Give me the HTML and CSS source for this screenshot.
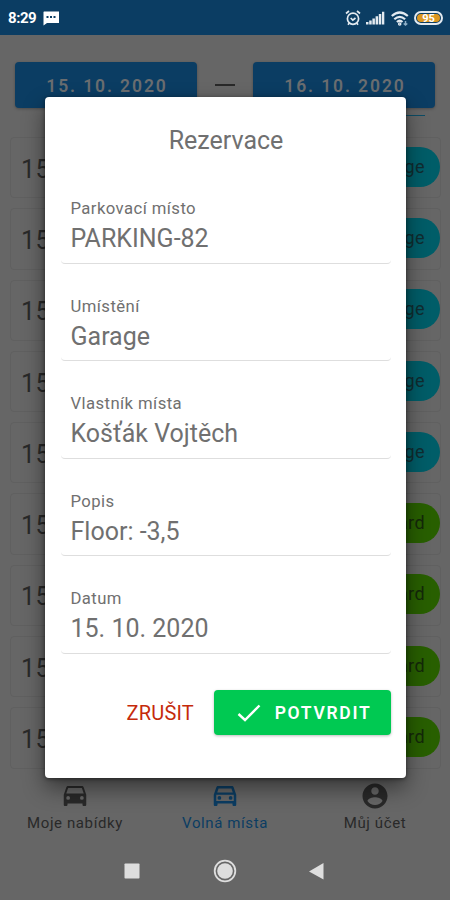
FILE: index.html
```html
<!DOCTYPE html>
<html lang="cs">
<head>
<meta charset="utf-8">
<title>Rezervace</title>
<link rel="stylesheet" href="styles.css">
</head>
<body>
<div class="app">
  <header class="status">
    <span class="clock">8:29</span>
    <svg class="msg" width="17" height="15" viewBox="0 0 17 15"><path fill="#fff" d="M1 .5h15v11.500H4L.5 14.500V1z"/><path stroke="#0b3d63" stroke-width="2" stroke-dasharray="2 1.500" d="M3.500 6h10"/></svg>
    <span class="grow"></span>
    <svg class="alarm" width="16" height="16" viewBox="0 0 16 16" fill="none" stroke="#e3eaf0" stroke-width="1.700"><circle cx="8" cy="8.700" r="5.600"/><path d="M1 3.500 4 1M15 3.500 12 1M5.700 8l2.100 2.100L10.500 8M4.300 13l-1.300 1.700M11.700 13l1.300 1.700"/></svg>
    <svg class="signal" width="19" height="14" viewBox="0 0 19 14" fill="#e3eaf0"><path d="M0 11h2.500v2.500H0zM3.200 9.500h2.500v4H3.200zM6.400 7.500h2.500v6H6.400zM9.600 5.300h2.500v8.200H9.600zM12.800 3h2.500v10.500h-2.500zM16 .8h2.300v12.700H16z"/></svg>
    <svg class="wifi" width="18" height="15" viewBox="0 0 18 15" fill="none" stroke="#e3eaf0" stroke-width="2.200"><path d="M.8 5Q8.700-2 16.800 5M3.300 8.300q5.400-5 10.800 0M5.900 11q2.800-2.500 5.600 0"/><circle cx="8.700" cy="13" r=".7"/><path stroke="#8fb0c8" stroke-width="1.500" d="M14.500 10v4M12.700 12.500l1.800 1.500 1.800-1.500"/></svg>
    <span class="battery"><span class="charge">95</span></span>
  </header>
  <div class="dates"><span class="date">15. 10. 2020</span><i class="dash"></i><span class="date">16. 10. 2020</span></div>
  <div class="rule"></div>
  <main class="list">
    <div class="row"><span>15</span><b class="pill">Garage</b></div>
    <div class="row"><span>15</span><b class="pill">Garage</b></div>
    <div class="row"><span>15</span><b class="pill">Garage</b></div>
    <div class="row"><span>15</span><b class="pill">Garage</b></div>
    <div class="row"><span>15</span><b class="pill">Garage</b></div>
    <div class="row"><span>15</span><b class="pill yard">Yard</b></div>
    <div class="row"><span>15</span><b class="pill yard">Yard</b></div>
    <div class="row"><span>15</span><b class="pill yard">Yard</b></div>
    <div class="row"><span>15</span><b class="pill yard">Yard</b></div>
  </main>
  <nav class="tabs">
    <div class="tab"><svg width="30" height="30" viewBox="0 0 24 24" fill="#292929"><path fill-rule="evenodd" d="M18.920 5.010C18.720 4.420 18.160 4 17.500 4h-11c-.66 0-1.210.42-1.420 1.010L3 11v8c0 .55.45 1 1 1h1c.55 0 1-.45 1-1v-1h12v1c0 .55.45 1 1 1h1c.55 0 1-.45 1-1v-8l-2.080-5.990zM6.500 15a1.500 1.500 0 1 1 0-3 1.500 1.500 0 0 1 0 3zm11 0a1.500 1.500 0 1 1 0-3 1.500 1.500 0 0 1 0 3zM5 10l1.500-4.500h11L19 10H5z"/></svg><span>Moje nabídky</span></div>
    <div class="tab active"><svg width="30" height="30" viewBox="0 0 24 24" fill="#0b3d63"><path fill-rule="evenodd" d="M18.920 5.010C18.720 4.420 18.160 4 17.500 4h-11c-.66 0-1.210.42-1.420 1.010L3 11v8c0 .55.45 1 1 1h1c.55 0 1-.45 1-1v-1h12v1c0 .55.45 1 1 1h1c.55 0 1-.45 1-1v-8l-2.080-5.990zM6.850 6h10.290l1.080 3.110H5.770L6.850 6zM19 16H5v-5h14v5z"/><circle cx="7.500" cy="13.500" r="1.500"/><circle cx="16.500" cy="13.500" r="1.500"/></svg><span>Volná místa</span></div>
    <div class="tab"><svg width="30" height="30" viewBox="0 0 24 24" fill="#292929"><path d="M12 2C6.480 2 2 6.480 2 12s4.480 10 10 10 10-4.480 10-10S17.520 2 12 2zm0 3c1.660 0 3 1.340 3 3s-1.340 3-3 3-3-1.340-3-3 1.340-3 3-3zm0 14.200c-2.500 0-4.710-1.280-6-3.220.03-1.990 4-3.080 6-3.080s5.970 1.090 6 3.080c-1.290 1.940-3.500 3.220-6 3.220z"/></svg><span>Můj účet</span></div>
  </nav>
  <footer class="system">
    <svg width="24" height="24" viewBox="0 0 24 24"><rect x="3.500" y="4.500" width="15" height="15" rx=".8" fill="#dedede"/></svg>
    <svg width="24" height="24" viewBox="0 0 24 24"><circle cx="12" cy="12" r="10.300" fill="none" stroke="#dedede" stroke-width="1.800"/><circle cx="12" cy="12" r="7.800" fill="#dedede"/></svg>
    <svg width="24" height="24" viewBox="0 0 24 24"><path fill="#dedede" d="M3 12.500 17.500 4v16.500z"/></svg>
  </footer>
  <section class="dialog">
    <h1>Rezervace</h1>
    <div class="field"><label>Parkovací místo</label><p>PARKING-82</p></div>
    <div class="field"><label>Umístění</label><p>Garage</p></div>
    <div class="field"><label>Vlastník místa</label><p>Košťák Vojtěch</p></div>
    <div class="field"><label>Popis</label><p>Floor: -3,5</p></div>
    <div class="field"><label>Datum</label><p>15. 10. 2020</p></div>
    <div class="actions">
      <span class="cancel">ZRUŠIT</span>
      <span class="confirm"><svg width="24" height="18" viewBox="0 0 24 18"><path d="M1.500 10 8 16 22.500 1.500" fill="none" stroke="#fff" stroke-width="2.400"/></svg><span>POTVRDIT</span></span>
    </div>
  </section>
</div>
</body>
</html>
```
FILE: styles.css
```css
* { box-sizing: border-box; }
body { margin: 0; font-family: Roboto, sans-serif; background: #666; }
.app { position: relative; width: 450px; height: 900px; overflow: hidden; display: flex; flex-direction: column; background: #666; }
.status { height: 35px; flex: none; display: flex; align-items: center; padding: 1px 7px 0 8px; background: #0b3d63; color: #fff; }
.clock { font-size: 15px; font-weight: 700; letter-spacing: -.45px; }
.msg { margin-left: 7px; }
.grow { flex: 1; }
.alarm { margin-right: 5px; }
.signal { margin-right: 6px; }
.wifi { margin-right: 5px; }
.battery { width: 29px; height: 14px; border: 2px solid #e3eaf0; border-radius: 7px; padding: 1px; display: flex; }
.charge { flex: 1; border-radius: 4px; background: #dc971f; font-size: 11px; line-height: 9px; font-weight: 700; text-align: center; }
.dates { flex: none; display: flex; align-items: center; justify-content: space-between; padding: 27px 15px 0; }
.date { width: 182px; height: 46px; border-radius: 4px; background: #0b3d63; color: #6a6d70; font-size: 17.500px; font-weight: 600; letter-spacing: 1.900px; padding-left: 2px; text-align: center; line-height: 48px; box-shadow: 0 1px 3px #0004; }
.dash { width: 20px; height: 2px; background: #292929; }
.rule { flex: none; height: 1px; margin: 7px 25px 0 255px; background: #0d4d66; }
.list { flex: none; display: flex; flex-direction: column; gap: 10px; padding: 21px 9px 0 10px; }
.row { height: 61.300px; display: flex; align-items: center; justify-content: space-between; padding-left: 10px; border: 1px solid #606060; border-radius: 4px; color: #292929; font-size: 25px; letter-spacing: .4px; }
.row span { margin-top: 3px; }
.pill { width: 100px; height: 40px; margin-bottom: 2px; border-radius: 20px; background: #005d68; color: #102c30; font-size: 18px; font-weight: 400; line-height: 40px; text-align: right; padding-right: 15px; }
.pill.yard { background: #285f00; color: #14290a; }
.tabs { flex: none; display: flex; margin-top: 7px; height: 61px; }
.tab { flex: 1; display: flex; flex-direction: column; align-items: center; padding-top: 5px; color: #292929; font-size: 15px; letter-spacing: .6px; line-height: 18px; }
.tab svg { margin-bottom: 3px; }
.active { color: #0b3d63; }
.system { flex: none; display: flex; justify-content: center; gap: 68.500px; padding-top: 22px; }
.dialog { position: absolute; left: 45px; top: 97px; width: 361px; height: 681px; padding: 27px 15px 0 16px; background: #fff; border-radius: 4px; box-shadow: 0 10px 22px #0007, 0 1px 4px #0007; color: #707070; }
h1 { margin: 0; font-size: 25px; line-height: 33px; font-weight: 400; text-align: center; letter-spacing: 0; }
.field { height: 97.500px; padding: 32px 9.500px 0; border-bottom: 1px solid #dedede; border-radius: 4px; }
.field:nth-of-type(1) { margin-top: 9px; }
.field label { display: block; font-size: 16.700px; line-height: 22px; letter-spacing: .42px; }
.field p { margin: 2px 0 0; font-size: 25px; line-height: 33px; letter-spacing: 0; }
.actions { display: flex; justify-content: flex-end; align-items: center; gap: 20px; margin-top: 36.500px; }
.cancel { color: #c52a0b; font-size: 20px; letter-spacing: .2px; }
.confirm { width: 177px; height: 45px; display: flex; align-items: center; justify-content: center; gap: 14px; padding-left: 3px; background: #00c952; color: #fff; border-radius: 4px; font-size: 17.500px; font-weight: 600; letter-spacing: 1.700px; box-shadow: 0 1px 3px #0004; }
```
